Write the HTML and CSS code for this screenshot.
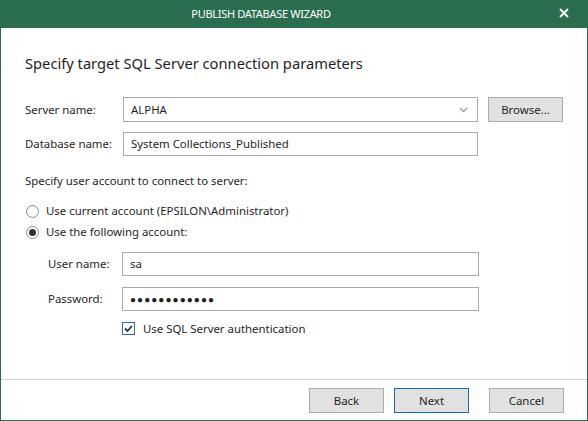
FILE: index.html
```html
<!DOCTYPE html>
<html lang="en">

<head>
    <meta charset="UTF-8">
    <title>Publish Database Wizard</title>
    <link rel="stylesheet" href="styles.css">
</head>

<body>
    <div class="window">
        <div class="titlebar">
            <span class="title">PUBLISH DATABASE WIZARD</span>
            <svg class="close" width="10" height="10" viewBox="0 0 10 10">
                <path d="M1 1L9 9M9 1L1 9" stroke="#fff" stroke-width="2" />
            </svg>
        </div>

        <div class="content">
            <h1 class="heading">Specify target SQL Server connection parameters</h1>

            <!--server and database-->
            <div class="row row-server">
                <label class="label">Server name:</label>
                <div class="combo">
                    <span>ALPHA</span>
                    <svg class="chevron" width="9" height="6" viewBox="0 0 9 6">
                        <path d="M1 1L4.5 4.5L8 1" fill="none" stroke="#a0a0a0" stroke-width="1.5" />
                    </svg>
                </div>
                <button class="btn btn-browse">Browse...</button>
            </div>
            <div class="row row-db">
                <label class="label">Database name:</label>
                <div class="field field-db">System Collections_Published</div>
            </div>

            <p class="section-text">Specify user account to connect to server:</p>

            <div class="radio-row">
                <span class="radio"></span>
                <span>Use current account (EPSILON\Administrator)</span>
            </div>
            <div class="radio-row">
                <span class="radio checked"></span>
                <span>Use the following account:</span>
            </div>

            <!--account fields-->
            <div class="account">
                <div class="row row-user">
                    <label class="label label-sub">User name:</label>
                    <div class="field field-sub">sa</div>
                </div>
                <div class="row row-pass">
                    <label class="label label-sub">Password:</label>
                    <div class="field field-sub dots">&#9679;&#9679;&#9679;&#9679;&#9679;&#9679;&#9679;&#9679;&#9679;&#9679;&#9679;&#9679;</div>
                </div>
                <div class="check-row">
                    <span class="checkbox">
                        <svg width="11" height="11" viewBox="0 0 11 11">
                            <path d="M2 5.5L4.5 8L9 3" fill="none" stroke="#333" stroke-width="1.8" />
                        </svg>
                    </span>
                    <span>Use SQL Server authentication</span>
                </div>
            </div>
        </div>

        <div class="footer">
            <button class="btn">Back</button>
            <button class="btn btn-default">Next</button>
            <button class="btn btn-cancel">Cancel</button>
        </div>
    </div>
</body>

</html>
```

FILE: styles.css
```css
body {
    margin: 0;
    font-family: "Noto Sans", "Open Sans", sans-serif;
    font-size: 11.4px;
    line-height: 16px;
    color: #1e1e1e;
}

.window {
    width: 588px;
    height: 421px;
    box-sizing: border-box;
    border: 1px solid #2b6d4f;
    border-top: none;
    background: #fff;
    display: flex;
    flex-direction: column;
}

.titlebar {
    height: 28px;
    margin: 0 -1px;
    padding-right: 66px;
    background: #2b6d4f;
    color: #fff;
    display: flex;
    align-items: center;
    justify-content: center;
    position: relative;
}

.title {
    font-size: 11px;
    letter-spacing: -0.3px;
}

.close {
    position: absolute;
    right: 19px;
    top: 8px;
}

.content {
    flex: 1;
    padding: 0 23px 0 24px;
}

.heading {
    font-size: 14.7px;
    font-weight: normal;
    margin: 25px 0 0 0;
    line-height: 20px;
}

.row {
    display: flex;
    align-items: center;
}

.row-server {
    margin-top: 24px;
}

.row-db {
    margin-top: 10px;
}

.label {
    width: 98px;
    flex: none;
}

.combo,
.field {
    box-sizing: border-box;
    border: 1px solid #a9a9a9;
    height: 25px;
    display: flex;
    align-items: center;
    padding: 0 7px;
}

.combo {
    width: 355px;
    justify-content: space-between;
    padding-right: 9px;
}

.field-db {
    width: 355px;
    height: 24px;
}

.section-text {
    margin: 17px 0 0 0;
}

.radio-row {
    display: flex;
    align-items: center;
    gap: 7px;
    height: 18px;
    margin-top: 13px;
}

.radio-row+.radio-row {
    margin-top: 3px;
}

.radio {
    width: 13px;
    height: 13px;
    box-sizing: border-box;
    border: 1px solid #8a8a8a;
    border-radius: 50%;
    margin-left: 1px;
    display: flex;
    align-items: center;
    justify-content: center;
}

.radio.checked::after {
    content: "";
    width: 7px;
    height: 7px;
    border-radius: 50%;
    background: #333;
}

.account {
    padding-left: 23px;
}

.row-user {
    margin-top: 11px;
}

.row-pass {
    margin-top: 11px;
}

.label-sub {
    width: 74px;
}

.field-sub {
    width: 357px;
    height: 24px;
}

.dots {
    font-size: 10px;
    letter-spacing: 1.05px;
}

.check-row {
    display: flex;
    align-items: center;
    gap: 8px;
    height: 13px;
    margin: 11px 0 0 74px;
}

.checkbox {
    width: 13px;
    height: 13px;
    box-sizing: border-box;
    border: 1px solid #2f6fb1;
    display: flex;
    align-items: center;
    justify-content: center;
}

.btn {
    font-family: inherit;
    font-size: 11.4px;
    color: #1e1e1e;
    width: 75px;
    height: 25px;
    background: #e1e1e1;
    border: 1px solid #adadad;
    padding: 0;
}

.btn-browse {
    margin-left: 10px;
}

.btn-default {
    border-color: #0f6cbd;
}

.footer {
    border-top: 1px solid #d5d5d5;
    height: 41px;
    box-sizing: border-box;
    display: flex;
    justify-content: flex-end;
    align-items: flex-start;
    padding: 8px 23px 0 0;
    gap: 10px;
}

.btn-cancel {
    margin-left: 10px;
}
```
